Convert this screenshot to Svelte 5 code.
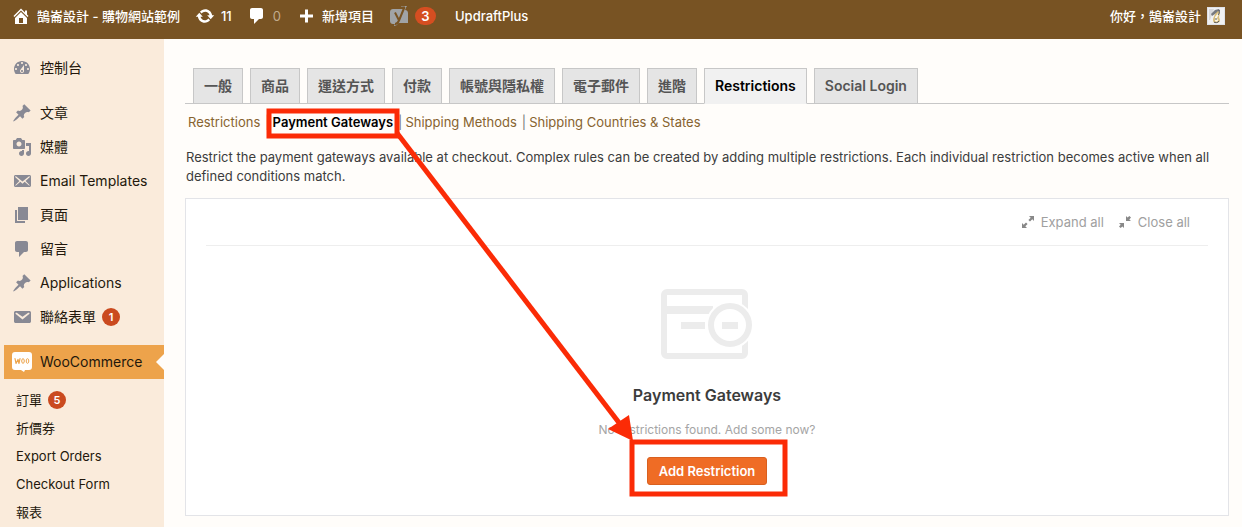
<script>
  const icons = {
    home: 'M16 8.5l1.53 1.53-1.06 1.06L10 4.6l-6.47 6.49-1.06-1.06L10 2.5l4 4v-2h2v4zm-6-2.46l6 5.99V18H4v-5.97zM12 17v-5H8v5h4z',
    update: 'M10.2 3.28c3.53 0 6.43 2.61 6.92 6h2.08l-3.5 4-3.5-4h2.32c-.45-1.97-2.21-3.45-4.32-3.45-1.45 0-2.73.71-3.54 1.78L4.95 5.66C6.23 4.2 8.11 3.28 10.2 3.28zm-.4 13.44c-3.52 0-6.43-2.61-6.92-6H.8l3.5-4c1.17 1.33 2.33 2.67 3.5 4H5.48c.45 1.97 2.21 3.45 4.32 3.45 1.45 0 2.73-.71 3.54-1.78l1.71 1.95c-1.28 1.46-3.15 2.38-5.25 2.38z',
    comment: 'M5 2h9c1.1 0 2 .9 2 2v7c0 1.1-.9 2-2 2h-2l-5 5v-5H5c-1.1 0-2-.9-2-2V4c0-1.1.9-2 2-2z',
    plus: 'M17 8.5v3h-5v5H9v-5H4v-3h5v-5h3v5z',
    dashboard: 'M3.76 16h12.48c1.1-1.37 1.76-3.11 1.76-5 0-4.42-3.58-8-8-8s-8 3.58-8 8c0 1.89.66 3.63 1.76 5zM10 4c.55 0 1 .45 1 1s-.45 1-1 1-1-.45-1-1 .45-1 1-1zM6 6c.55 0 1 .45 1 1s-.45 1-1 1-1-.45-1-1 .45-1 1-1zm8 0c.55 0 1 .45 1 1s-.45 1-1 1-1-.45-1-1 .45-1 1-1zm-5.37 5.55L12 7v6c0 1.1-.9 2-2 2s-2-.9-2-2c0-.57.24-1.08.63-1.45zM4 10c.55 0 1 .45 1 1s-.45 1-1 1-1-.45-1-1 .45-1 1-1zm12 0c.55 0 1 .45 1 1s-.45 1-1 1-1-.45-1-1 .45-1 1-1zm-5 3c0-.55-.45-1-1-1s-1 .45-1 1 .45 1 1 1 1-.45 1-1z',
    pin: 'M10.44 3.02l1.82-1.82 6.36 6.35-1.83 1.82c-1.05-.68-2.48-.57-3.41.36l-.75.75c-.92.93-1.04 2.35-.35 3.41l-1.83 1.82-2.41-2.41-2.8 2.79c-.42.42-3.38 2.71-3.8 2.29s1.86-3.39 2.28-3.81l2.79-2.79L4.1 9.36l1.83-1.82c1.05.69 2.48.57 3.4-.36l.75-.75c.93-.92 1.05-2.35.36-3.41z',
    media: 'M13 11V4c0-.55-.45-1-1-1h-1.67L9 1H5L3.67 3H2c-.55 0-1 .45-1 1v7c0 .55.45 1 1 1h10c.55 0 1-.45 1-1zM7 4.5c1.38 0 2.5 1.12 2.5 2.5S8.38 9.5 7 9.5 4.5 8.38 4.5 7 5.62 4.5 7 4.5zM14 6h5v10.5c0 1.38-1.12 2.5-2.5 2.5S14 17.88 14 16.5s1.12-2.5 2.5-2.5c.17 0 .34.02.5.05V9h-3V6zm-4 8.05V13h2v3.5c0 1.38-1.12 2.5-2.5 2.5S7 17.88 7 16.5 8.12 14 9.5 14c.17 0 .34.02.5.05z',
    emailAlt: 'M19 14.5v-9c0-.83-.67-1.5-1.5-1.5H3.49c-.83 0-1.5.67-1.5 1.5v9c0 .83.67 1.5 1.5 1.5H17.5c.83 0 1.5-.67 1.5-1.5zm-1.31-9.11c.33.33.15.67-.03.84L13.6 9.95l3.9 4.06c.12.14.2.36.06.51-.13.16-.43.15-.56.05l-4.37-3.73-2.14 1.95-2.13-1.95-4.37 3.73c-.13.1-.43.11-.56-.05-.14-.15-.06-.37.06-.51l3.9-4.06-4.06-3.72c-.18-.17-.36-.51-.03-.84s.67-.17.95.07l6.24 5.04 6.25-5.04c.28-.24.62-.4.95-.07z',
    email: 'M3.87 4h13.25C18.37 4 19 4.59 19 5.79v8.42c0 1.19-.63 1.79-1.88 1.79H3.87c-1.25 0-1.88-.6-1.88-1.79V5.79c0-1.2.63-1.79 1.88-1.79zm6.62 8.6l6.74-5.53c.24-.2.43-.66.13-1.07-.29-.41-.82-.42-1.17-.17l-5.7 3.86L4.8 5.83c-.35-.25-.88-.24-1.17.17-.3.41-.11.87.13 1.07z',
    page: 'M6 15V2h10v13H6zm-1 1h8v2H3V5h2v11z'
  };

  const menu = [
    { icon: 'pin', label: '文章' },
    { icon: 'media', label: '媒體' },
    { icon: 'emailAlt', label: 'Email Templates' },
    { icon: 'page', label: '頁面' },
    { icon: 'comment', label: '留言' },
    { icon: 'pin', label: 'Applications' },
    { icon: 'email', label: '聯絡表單', count: 1 }
  ];

  const submenu = [
    { label: '訂單', count: 5 },
    { label: '折價券' },
    { label: 'Export Orders' },
    { label: 'Checkout Form' },
    { label: '報表' }
  ];

  const tabs = ['一般', '商品', '運送方式', '付款', '帳號與隱私權', '電子郵件', '進階', 'Restrictions', 'Social Login'];
  const sections = ['Restrictions', 'Payment Gateways', 'Shipping Methods', 'Shipping Countries & States'];
  let activeTab = $state('Restrictions');
  let activeSection = $state('Payment Gateways');
</script>

{#snippet icon(name)}
  <svg class="icon" viewBox="0 0 20 20" aria-hidden="true"><path fill-rule="evenodd" d={icons[name]} /></svg>
{/snippet}

<div class="page">
  <header class="bar">
    <a class="site" href="#home">{@render icon('home')}<span>鵠崙設計 - 購物網站範例</span></a>
    <a class="updates" href="#updates">{@render icon('update')}<span>11</span></a>
    <a class="comments" href="#comments">{@render icon('comment')}<span class="dim">0</span></a>
    <a class="new" href="#new">{@render icon('plus')}<span>新增項目</span></a>
    <a class="seo" href="#seo">
      <svg class="icon yoast" viewBox="0 0 20 20" aria-hidden="true">
        <path fill="#a0a3a6" d="M4 3h11v1h1c1.700 0 3 1.300 3 3v10H7l-1 1H4c-1.700 0-3-1.300-3-3V6c0-1.700 1.300-3 3-3z" />
        <path fill="none" stroke="#a0a3a6" stroke-width="1.200" d="M12 0h6M17 0l-2 5M5 19.400c2 0 3-1 4-2.400" />
        <path fill="none" stroke="#785323" stroke-width="2" d="M6 6.500l3.800 7.500M15.500 1L10 14.500c-.8 2-2 3.500-4 3.500" />
      </svg>
      <span class="badge big">3</span>
    </a>
    <a class="updraft" href="#updraft">UpdraftPlus</a>
    <a class="account" href="#account">
      <span>你好，鵠崙設計</span>
      <svg class="avatar" viewBox="0 0 18 18" aria-hidden="true">
        <path fill="#dfe1e6" d="M0 0h18v18H0z" />
        <path fill="#f1f1f2" d="M1 1h16v16H1z" />
        <path fill="#d8d9dc" d="M2 2h5L3 13H2z" />
        <path fill="#777a80" d="M4 7l4-4 4-1 1 2-5 3-3 2z" />
        <path fill="#d9be7c" d="M8 7l3-3 2 2-1 4 1 3c0 2-1 3-4 3s-3-2-3-4z" />
        <path fill="#fcf8e9" d="M8 10l3-4 1 1-2 4 1 2c0 2-3 2-3 0z" />
        <path fill="none" stroke="#585a60" d="M12 3c1 2 0 4-1 5M8 12h2M7 15c1 1 4 1 5-1" />
      </svg>
    </a>
  </header>

  <div class="body">
    <nav class="side" aria-label="Admin menu">
      <ul class="group">
        <li><a href="#dashboard">{@render icon('dashboard')}<span>控制台</span></a></li>
      </ul>
      <ul class="group">
        {#each menu as item}
          <li>
            <a href="#{item.label}">
              {@render icon(item.icon)}<span>{item.label}</span>
              {#if item.count}<span class="badge">{item.count}</span>{/if}
            </a>
          </li>
        {/each}
      </ul>
      <a class="current" href="#woocommerce">
        <svg class="icon" viewBox="0 0 20 20" aria-hidden="true">
          <path fill="#fff" d="M3 0h14a3 3 0 0 1 3 3v12a3 3 0 0 1-3 3h-4l-1 2-3-2H3a3 3 0 0 1-3-3V3a3 3 0 0 1 3-3z" />
          <path fill="none" stroke="#eda44b" stroke-width="1.200" stroke-linecap="round" stroke-linejoin="round" d="M3 6.500l1 5 2-4 1 4 1-5" />
          <ellipse cx="11" cy="9" rx="1.300" ry="2.300" fill="none" stroke="#eda44b" />
          <ellipse cx="15.500" cy="9" rx="1.300" ry="2.300" fill="none" stroke="#eda44b" />
        </svg>
        <span>WooCommerce</span>
      </a>
      <ul class="sub">
        {#each submenu as item}
          <li>
            <a href="#{item.label}">
              <span>{item.label}</span>
              {#if item.count}<span class="badge">{item.count}</span>{/if}
            </a>
          </li>
        {/each}
      </ul>
    </nav>

    <main>
      <nav class="tabs" aria-label="Settings">
        {#each tabs as tab}
          <a href="#{tab}" class:active={tab === activeTab} onclick={() => (activeTab = tab)}>{tab}</a>
        {/each}
      </nav>

      <ul class="sections">
        {#each sections as section}
          <li>
            <a href="#{section}" class:active={section === activeSection} onclick={() => (activeSection = section)}>{section}</a>
          </li>
        {/each}
      </ul>

      <p class="intro">
        Restrict the payment gateways available at checkout. Complex rules can be created by adding multiple restrictions. Each individual restriction becomes active when all defined conditions match.
      </p>

      <section class="panel">
        <div class="tools">
          <button type="button">
            <svg viewBox="0 0 12 12" aria-hidden="true"><path d="M7 0h5v5l-1.700-1.700L8 5.600 6.400 4l2.300-2.300zM0 7l1.700 1.700L4 6.400 5.600 8l-2.300 2.300L5 12H0z" /></svg>
            Expand all
          </button>
          <button type="button">
            <svg viewBox="0 0 12 12" aria-hidden="true"><path d="M7 0l1.500 1.500L10.400 0 12 1.600l-1.700 1.800L12 5H7zM0 7h5v5l-1.600-1.600L1.600 12 0 10.400l1.700-1.700z" /></svg>
            Close all
          </button>
        </div>
        <div class="empty">
          <svg class="art" viewBox="0 0 92 70" aria-hidden="true">
            <rect x="3" y="3" width="81" height="64" rx="3" fill="none" stroke="#ececec" stroke-width="6" />
            <path fill="#ececec" d="M6 17h46v8H6zM20 33h24v7H20z" />
            <circle cx="69" cy="36" r="24" fill="#fff" />
            <circle cx="69" cy="36" r="19" fill="none" stroke="#ececec" stroke-width="6" />
            <path fill="#ececec" d="M61 33h16v7H61z" />
          </svg>
          <h2>Payment Gateways</h2>
          <p>No restrictions found. Add some now?</p>
          <button class="primary" type="button">Add Restriction</button>
        </div>
      </section>
    </main>
  </div>

  <svg class="marks" viewBox="0 0 1242 527" aria-hidden="true">
    <rect x="269" y="111" width="128" height="25" />
    <path d="M397 133L620 424" />
    <path class="head" d="M633 441L608 429L629 415z" />
    <rect x="632" y="442" width="153" height="52" />
  </svg>
</div>

<style>
  :global(body) {
    margin: 0;
    background: #fffdfa;
  }
  .page {
    position: relative;
    display: flex;
    flex-direction: column;
    min-height: 100vh;
    overflow: hidden;
    font: 13px/20px Inter, "Noto Sans CJK TC", sans-serif;
    color: #3c3c3c;
  }
  a {
    color: inherit;
    text-decoration: none;
  }
  ul {
    list-style: none;
    margin: 0;
    padding: 0;
  }
  button {
    font: inherit;
    cursor: pointer;
  }
  .icon {
    flex: none;
    width: 20px;
    height: 20px;
    fill: currentColor;
  }
  .bar {
    display: flex;
    align-items: center;
    box-sizing: border-box;
    height: 39px;
    padding: 0 17px 8px 11px;
    background: #785323;
    color: #fff;
    font-weight: 500;
  }
  .bar a {
    display: flex;
    align-items: center;
    gap: 6px;
    margin-right: 15px;
    white-space: nowrap;
  }
  .bar .seo {
    margin-right: 19px;
  }
  .bar .dim {
    color: #c2ab8c;
    font-weight: 400;
  }
  .bar .account {
    margin: 0 0 0 auto;
  }
  .avatar {
    width: 18px;
    height: 18px;
  }
  .badge {
    box-sizing: border-box;
    min-width: 18px;
    padding: 0 5px;
    border-radius: 9px;
    background: #ca4a1f;
    color: #fff;
    font-size: 11px;
    line-height: 18px;
    font-weight: 600;
    text-align: center;
  }
  .badge.big {
    min-width: 21px;
    background: #d54e21;
    font-size: 13px;
  }
  .body {
    display: flex;
    flex: 1;
  }
  .side {
    flex: none;
    box-sizing: border-box;
    width: 164px;
    padding-top: 12px;
    background: #faebdb;
    color: #23180c;
    font-size: 14px;
  }
  .group {
    margin-bottom: 11px;
  }
  .group a,
  .current {
    display: flex;
    align-items: center;
    gap: 8px;
    height: 34px;
    padding-left: 12px;
    white-space: nowrap;
  }
  .group .icon {
    color: #888994;
  }
  .group .badge {
    margin-left: -2px;
  }
  .current {
    position: relative;
    margin-left: 4px;
    padding-left: 8px;
    background: #eda34b;
  }
  .current::after {
    content: "";
    position: absolute;
    top: 9px;
    right: 0;
    border: 8px solid transparent;
    border-left: 0;
    border-right-color: #fffdfa;
  }
  .sub {
    padding-top: 7px;
    font-size: 13px;
  }
  .sub a {
    display: flex;
    align-items: center;
    gap: 6px;
    height: 28px;
    padding-left: 16px;
  }
  main {
    flex: 1;
    min-width: 0;
    padding: 29px 13px 11px 21px;
  }
  .tabs {
    display: flex;
    gap: 7px;
    padding-left: 8px;
    border-bottom: 1px solid #c7c7c7;
    font-size: 14px;
    line-height: 24px;
    font-weight: 600;
    color: #555;
  }
  .tabs a {
    margin-bottom: -1px;
    padding: 5px 10px;
    border: 1px solid #c7c7c7;
    background: #e5e5e5;
    white-space: nowrap;
  }
  .tabs .active {
    border-bottom-color: #f1f1f1;
    background: #f1f1f1;
    color: #000;
  }
  .sections {
    display: flex;
    padding: 8px 3px;
    white-space: nowrap;
  }
  .sections li:not(:last-child)::after {
    content: "|";
    padding: 0 3px 0 5px;
    color: #777;
  }
  .sections a {
    color: #87632f;
  }
  .sections .active {
    color: #000;
    font-weight: 600;
  }
  .intro {
    max-width: 1024px;
    margin: 8px 1px 12px;
    line-height: 19px;
  }
  .panel {
    padding: 0 20px 30px;
    border: 1px solid #e3e4e8;
    background: #fff;
  }
  .tools {
    display: flex;
    justify-content: flex-end;
    gap: 15px;
    padding: 13px 18px;
    border-bottom: 1px solid #eee;
  }
  .tools button {
    display: flex;
    align-items: center;
    gap: 7px;
    padding: 0;
    border: 0;
    background: none;
    color: #a0a0a0;
  }
  .tools svg {
    width: 12px;
    height: 12px;
    fill: #888;
  }
  .empty {
    display: flex;
    flex-direction: column;
    align-items: center;
    padding-top: 43px;
  }
  .art {
    width: 92px;
    height: 70px;
  }
  h2 {
    margin: 24px 0 14px;
    font-size: 16px;
    line-height: 24px;
    font-weight: 600;
  }
  .empty p {
    margin: 0 0 18px;
    color: #a5a5a5;
    font-size: 12px;
    line-height: 18px;
  }
  .primary {
    padding: 3px 11px;
    border: 1px solid #d9601f;
    border-radius: 3px;
    background: #ef6c25;
    color: #fff;
    font-weight: 600;
  }
  .marks {
    position: absolute;
    top: 0;
    left: 0;
    width: 1242px;
    height: 527px;
    pointer-events: none;
    fill: none;
    stroke: #fb2b06;
    stroke-width: 5;
  }
  .marks .head {
    fill: #fb2b06;
    stroke: none;
  }
</style>
